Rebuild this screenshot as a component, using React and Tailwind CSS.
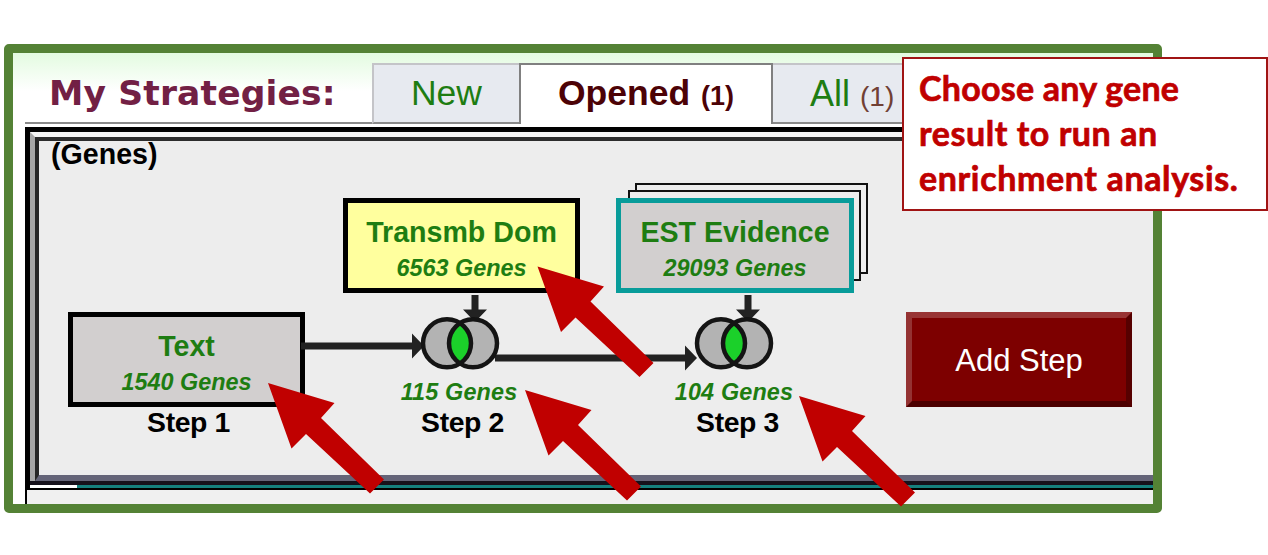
const genes = "text-[#1e7d12]";

function StepBox({ className, name, count }) {
  return (
    <div className={`absolute flex flex-col items-center border-5 pt-[12px] text-center whitespace-nowrap ${className}`}>
      <span className={`text-[28.6px] leading-[34px] font-bold ${genes}`}>{name}</span>
      <span className={`text-[23.4px] leading-[38px] font-bold italic ${genes}`}>{count}</span>
    </div>
  );
}

function Result({ className, count, label }) {
  return (
    <div className={`absolute flex w-[160px] flex-col items-center whitespace-nowrap ${className}`}>
      {count && <span className={`text-[23.4px] leading-[28px] font-bold tracking-[0.15px] italic ${genes}`}>{count}</span>}
      <span className={`text-[28.4px] leading-[33px] font-bold tracking-[-0.4px] text-black ${count ? "ml-[7px]" : "ml-px"}`}>{label}</span>
    </div>
  );
}

function Venn({ x }) {
  return (
    <g transform={`translate(${x} 343.3)`}>
      <circle cx="-13" r="24" fill="#b3b3b3" />
      <circle cx="13" r="24" fill="#b3b3b3" />
      <path d="M0 -20.2A24 24 0 0 1 0 20.2A24 24 0 0 1 0 -20.2Z" fill="#1bd02a" />
      <circle cx="-13" r="24" fill="none" stroke="#141414" strokeWidth="4.5" />
      <circle cx="13" r="24" fill="none" stroke="#141414" strokeWidth="4.5" />
    </g>
  );
}

function Connectors() {
  return (
    <svg className="absolute top-0 left-0" width="1114" height="334" viewBox="39 141 1114 334">
      <g fill="#222">
        <path d="M301 342.5H412V333.5L424 346L412 358.5V349.5H301Z" />
        <path d="M495 354.5H685V345.5L697 358L685 370.5V361.5H495Z" />
        <path d="M471.5 295H478.5V309.5H487L475 322L463 309.5H471.5Z" />
        <path d="M744.5 295H751.5V309.5H760L748 322L736 309.5H744.5Z" />
      </g>
      <Venn x={460} />
      <Venn x={734} />
    </svg>
  );
}

function Pointers() {
  const offsets = [[0, 0], [257, 7], [531, 13], [269.5, -116.5]];
  return (
    <svg className="pointer-events-none absolute top-0 left-0" width="1268" height="555">
      {offsets.map(([x, y]) => (
        <path
          key={x}
          transform={`translate(${x} ${y})`}
          d="M268 383L334.5 403L321 418L384 479.5L370 493.5L306 434L291.5 448.5Z"
          fill="#c00000"
        />
      ))}
    </svg>
  );
}

function Tabs() {
  return (
    <div className="flex h-[74px] items-start bg-linear-to-b from-[#e3fbe0] to-white to-[38px] pl-3">
      <div className="mt-[69px] -mr-[347px] h-[2px] w-[347px] bg-[#8a8a8a]" />
      <h1 className="mt-[20px] w-[347px] pl-[24px] font-[DejaVu_Sans] text-[34.5px] leading-[40px] font-bold tracking-[0.15px] whitespace-nowrap text-[#722044]">
        My Strategies:
      </h1>
      <div className="mt-[10px] flex h-[61px] w-[147px] items-center justify-center border-2 border-r-0 border-[#c4c4c8] border-b-[#8a8a8a] bg-[#e7eaf0] pb-[2px]">
        <span className="text-[35.5px] leading-[40px] text-[#1e7d12]">New</span>
      </div>
      <div className="mt-[10px] flex h-[61px] w-[254px] items-center justify-center border-2 border-b-0 border-[#808080] bg-white">
        <span className="flex items-baseline gap-[11px] text-[35.5px] leading-[40px] font-bold text-[#4c0206]">
          Opened <span className="text-[27px]">(1)</span>
        </span>
      </div>
      <div className="mt-[10px] flex h-[61px] flex-1 items-center border-t-2 border-b-2 border-t-[#c4c4c8] border-b-[#8a8a8a] bg-[#e7eaf0] pt-[3px] pl-[37px]">
        <span className="flex items-baseline gap-[10px] text-[36px] leading-[40px] text-[#1e7d12]">
          All <span className="text-[28px] text-[#714034]">(1)</span>
        </span>
      </div>
    </div>
  );
}

function Canvas() {
  return (
    <div className="relative h-[334px] bg-[#ededed]">
      <span className="absolute top-[-4px] left-[12px] text-[28.6px] leading-[34px] font-bold text-black">(Genes)</span>
      <div className="absolute top-[42px] left-[596px] h-[91px] w-[233px] border-[2.5px] border-[#111] bg-[#ededed]" />
      <div className="absolute top-[49px] left-[589px] h-[91px] w-[233px] border-[2.5px] border-[#111] bg-[#ededed]" />
      <StepBox className="top-[57px] left-[304px] h-[95px] w-[237px] border-black bg-[#ffff9e]" name="Transmb Dom" count="6563 Genes" />
      <StepBox className="top-[57px] left-[577px] h-[95px] w-[238px] border-[#089c9a] bg-[#d2cfcf]" name="EST Evidence" count="29093 Genes" />
      <StepBox className="top-[171px] left-[29px] h-[95px] w-[237px] border-black bg-[#d2cfcf]" name="Text" count="1540 Genes" />
      <Connectors />
      <Result className="top-[265px] left-[69px]" label="Step 1" />
      <Result className="top-[237px] left-[340px]" count="115 Genes" label="Step 2" />
      <Result className="top-[237px] left-[615px]" count="104 Genes" label="Step 3" />
      <button className="absolute top-[171px] left-[867px] h-[95px] w-[226px] border-6 border-t-[#983434] border-r-[#560000] border-b-[#4c0000] border-l-[#943232] bg-[#7d0000] pt-[3px] text-[31px] whitespace-nowrap text-white">
        Add Step
      </button>
    </div>
  );
}

export default function App() {
  return (
    <div className="relative h-[555px] w-[1268px] overflow-hidden bg-white pt-[44px] pl-[4px] font-['Liberation_Sans',Arial,sans-serif]">
      <div className="h-[469px] w-[1158px] overflow-hidden rounded-[5px] border-9 border-[#548235] bg-white">
        <Tabs />
        <div className="ml-3 border-t-[5px] border-l-[5px] border-black">
          <div className="border-t-[5px] border-l-[5px] border-t-[#f4f4f4] border-l-[#a6a6a6]">
            <div className="border-t-4 border-b-6 border-l-4 border-t-[#2c2c2c] border-b-[#646478] border-l-[#262626]">
              <Canvas />
            </div>
          </div>
          <div className="h-[4px] bg-[#16121c]" />
          <div className="flex h-[3px] bg-white">
            <div className="ml-[47px] flex-1 bg-[#15807e]" />
          </div>
        </div>
        <div className="ml-3 h-[17px] border-t-2 border-l-2 border-black bg-[#f0f0f0]" />
      </div>
      <div className="absolute top-[57px] left-[902px] h-[154px] w-[366px] border-2 border-[#a01414] bg-white pt-[6px] pl-[15px] font-[Lato] text-[34px] leading-[45px] font-bold whitespace-nowrap text-[#c00000] [-webkit-text-stroke:0.7px_#c00000]">
        <p className="tracking-[0.25px]">Choose any gene</p>
        <p className="tracking-[0.55px]">result to run an</p>
        <p className="tracking-[0.62px]">enrichment analysis.</p>
      </div>
      <Pointers />
    </div>
  );
}
